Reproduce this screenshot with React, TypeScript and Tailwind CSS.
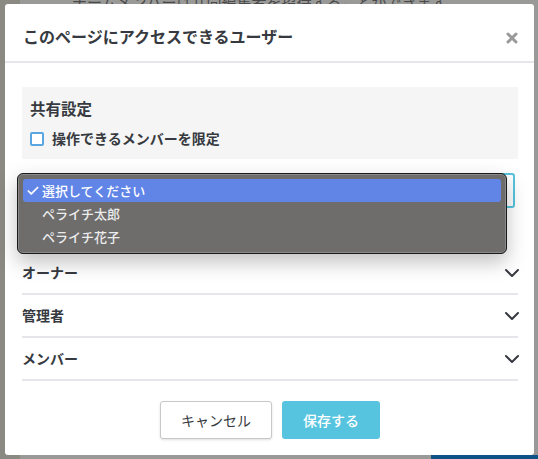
import { ChevronDown, Check, X } from 'lucide-react'

const FONT = '"Noto Sans CJK JP", "Liberation Sans", sans-serif'

const SECTIONS = ['オーナー', '管理者', 'メンバー']
const OPTIONS = ['選択してください', 'ペライチ太郎', 'ペライチ花子']

export default function App() {
  return (
    <div className="relative h-[459px] w-[538px] overflow-hidden bg-[#999997]" style={{ fontFamily: FONT }}>
      {/* dimmed page behind the modal */}
      <div className="absolute inset-y-0 left-0 w-[20px] bg-[#8a8982]" />
      <p className="absolute left-[72px] top-[-9px] text-[15px] whitespace-nowrap text-[#4a4a4a]">チームメンバーは共同編集者を招待することができます</p>
      <div className="absolute bottom-0 right-0 h-[4px] w-[107px] bg-[#0f5288]" />

      <div className="absolute left-[5px] top-1 flex h-[451px] w-[529px] flex-col rounded-[3px] bg-white text-[#363a40]">
        <div className="flex h-[59px] items-center justify-between border-b-2 border-[#e6e5ea] pl-[18px] pr-[14px] pt-[6px]">
          <h2 className="text-[16px] font-bold">このページにアクセスできるユーザー</h2>
          <X className="mt-1 h-4 w-4 text-[#999999]" strokeWidth={4.5} />
        </div>

        <div className="flex flex-col pl-[17px] pr-[16px] pt-[24px]">
          <div className="flex h-[72px] flex-col justify-center gap-[8px] bg-[#f5f5f5] px-2">
            <p className="text-[15.5px] font-bold">共有設定</p>
            <label className="flex items-center gap-2 text-[14px] font-bold">
              <span className="h-[14px] w-[14px] rounded-[2px] border-2 border-[#5aa6e0] bg-white" />
              操作できるメンバーを限定
            </label>
          </div>

          <div className="mt-[14px] h-[35px] w-[493px] rounded-[3px] border-2 border-[#57c4df]" />

          <div className="mt-[44px]">
            {SECTIONS.map(s => (
              <div key={s} className="flex h-[43px] items-center justify-between border-b-2 border-[#e6e5ea] text-[14px] font-bold">
                {s}
                <ChevronDown className="-mr-[6px] h-6 w-6 text-[#363a40]" />
              </div>
            ))}
          </div>

          <div className="mt-[20px] flex justify-center gap-[10px]">
            <button className="h-[38px] w-[112px] rounded-[3px] border border-[#c8c8c8] bg-white text-[14px] shadow-sm">キャンセル</button>
            <button className="h-[38px] w-[98px] rounded-[3px] bg-[#57c4df] text-[14px] font-medium text-white">保存する</button>
          </div>
        </div>

        {/* native select popup */}
        <div className="absolute left-3 top-[169px] flex h-[81px] w-[490px] flex-col rounded-[6px] border border-[#1a1a1a] bg-[#6e6d6c] p-[5px] text-[13px] font-medium text-white shadow-[inset_0_0_0_1px_#8a8a8a,0_8px_20px_rgba(0,0,0,0.25)]">
          {OPTIONS.map((o, i) => (
            <div key={o} className={`flex h-[23px] items-center rounded-[3px] ${i === 0 ? 'bg-[#6085e6]' : 'text-[#ececec]'}`}>
              <span className="flex w-[19px] justify-center">
                {i === 0 && <Check className="h-3.5 w-3.5" strokeWidth={3} />}
              </span>
              {o}
            </div>
          ))}
        </div>
      </div>
    </div>
  )
}
